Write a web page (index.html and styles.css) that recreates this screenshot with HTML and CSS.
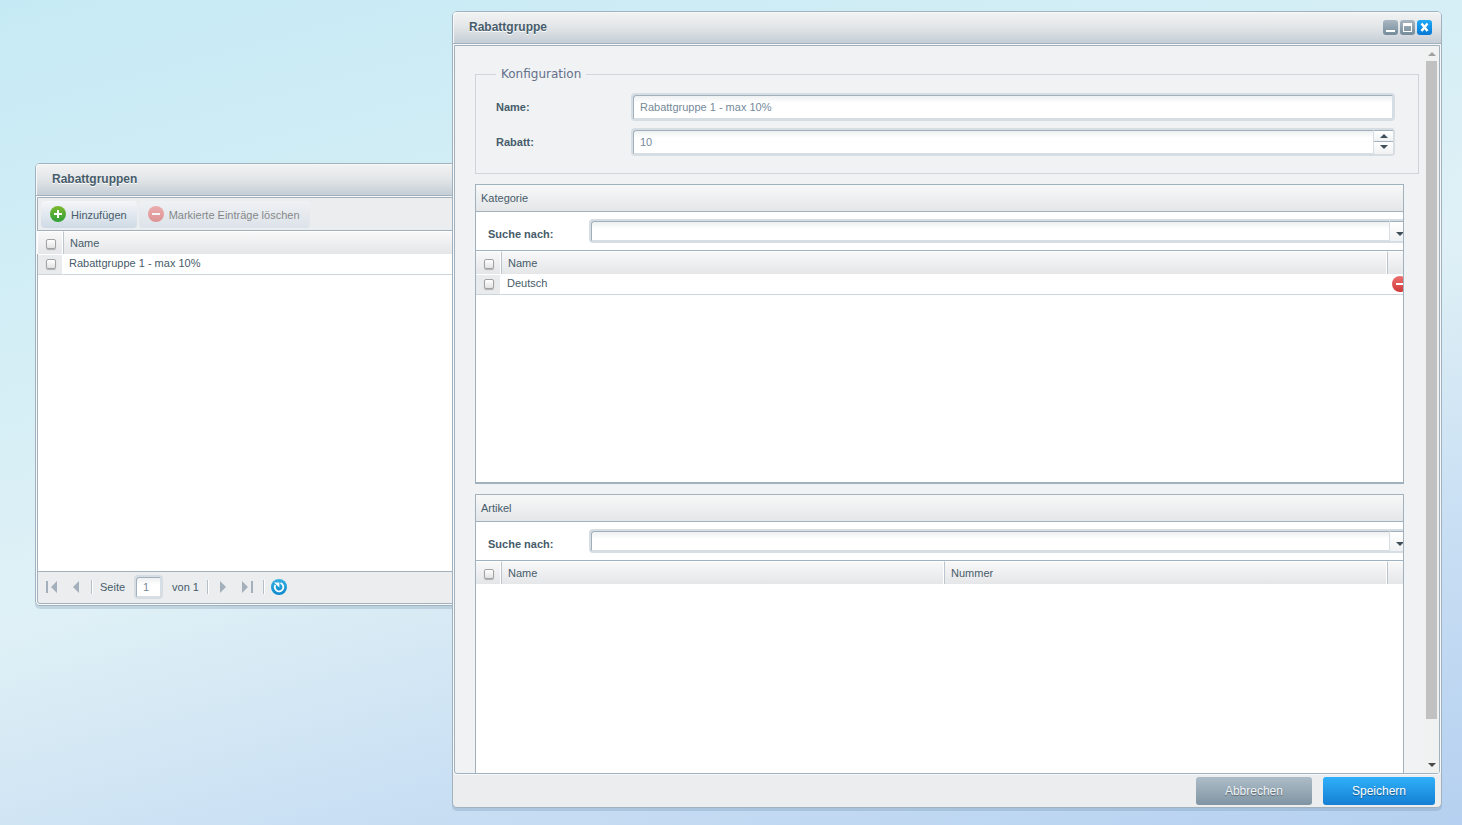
FILE: index.html
```html
<!DOCTYPE html>
<html lang="de">
<head>
<meta charset="utf-8">
<title>Rabattgruppen</title>
<link rel="stylesheet" href="styles.css">
</head>
<body>
<svg class="defs" aria-hidden="true">
  <defs>
    <linearGradient id="green" x1="0" y1="0" x2="0" y2="1"><stop offset="0" stop-color="#7cb82f"/><stop offset="1" stop-color="#2f9f3a"/></linearGradient>
    <linearGradient id="red" x1="0" y1="0" x2="0" y2="1"><stop offset="0" stop-color="#ee6f70"/><stop offset="1" stop-color="#d03a3a"/></linearGradient>
    <linearGradient id="blue" x1="0" y1="0" x2="0" y2="1"><stop offset="0" stop-color="#35b0e4"/><stop offset="1" stop-color="#0c88cc"/></linearGradient>
    <symbol id="plus" viewBox="0 0 16 16"><circle cx="8" cy="8" r="8" fill="url(#green)"/><path d="M8 4v8M4 8h8" stroke="#fff" stroke-width="2"/></symbol>
    <symbol id="minus" viewBox="0 0 16 16"><circle cx="8" cy="8" r="8" fill="url(#red)"/><path d="M4 8h8" stroke="#fff" stroke-width="2"/></symbol>
  </defs>
</svg>
<main class="desktop">
  <section class="window window-list" aria-labelledby="list-title">
    <header class="window-header"><h1 class="window-title" id="list-title">Rabattgruppen</h1></header>
    <div class="window-body list-body">
      <div class="toolbar">
        <button class="tool-button" type="button"><svg class="icon"><use href="#plus"/></svg>Hinzufügen</button>
        <button class="tool-button" type="button" disabled><svg class="icon"><use href="#minus"/></svg>Markierte Einträge löschen</button>
      </div>
      <div class="grid-area">
        <table class="grid">
          <colgroup><col class="col-check"><col></colgroup>
          <thead><tr><th class="check"><input class="tick" type="checkbox" aria-label="Alle auswählen"></th><th>Name</th></tr></thead>
          <tbody><tr><td class="check"><input class="tick" type="checkbox" aria-label="Rabattgruppe 1 auswählen"></td><td>Rabattgruppe 1 - max 10%</td></tr></tbody>
        </table>
      </div>
      <nav class="pager" aria-label="Seiten">
        <button class="page-button" type="button" aria-label="Erste Seite"><svg width="12" height="12"><path d="M0 0h2v12H0zM11 0v12L5 6z" fill="#a3b0bb"/></svg></button>
        <button class="page-button" type="button" aria-label="Vorherige Seite"><svg width="8" height="12"><path d="M7 0v12L1 6z" fill="#a3b0bb"/></svg></button>
        <span class="separator"></span>
        <label class="page-label" for="page">Seite</label>
        <span class="field page-field"><input class="field-input" id="page" type="text" value="1"></span>
        <span class="page-total">von 1</span>
        <span class="separator"></span>
        <button class="page-button" type="button" aria-label="Nächste Seite"><svg width="8" height="12"><path d="M0 0v12L6 6z" fill="#a3b0bb"/></svg></button>
        <button class="page-button" type="button" aria-label="Letzte Seite"><svg width="11" height="12"><path d="M0 0v12L6 6zM9 0h2v12H9z" fill="#a3b0bb"/></svg></button>
        <span class="separator"></span>
        <button class="refresh-button" type="button" aria-label="Aktualisieren"><svg class="icon" viewBox="0 0 16 16"><circle cx="8" cy="8" r="8" fill="url(#blue)"/><path d="M9.500 4A4.300 4.300 0 1 1 4.300 6" fill="none" stroke="#fff" stroke-width="1.800"/><path d="M3 3.600h5.400v5z" fill="#fff"/></svg></button>
      </nav>
    </div>
  </section>

  <section class="window window-detail" role="dialog" aria-labelledby="detail-title">
    <header class="window-header">
      <h1 class="window-title" id="detail-title">Rabattgruppe</h1>
      <div class="window-tools">
        <button class="window-tool" type="button" aria-label="Minimieren"><svg width="15" height="15"><path d="M3 10h9v2H3z" fill="#fff"/></svg></button>
        <button class="window-tool" type="button" aria-label="Maximieren"><svg width="15" height="15"><path d="M3 3h9v9H3zM4 6v5h7V6z" fill="#fff" fill-rule="evenodd"/></svg></button>
        <button class="window-tool window-close" type="button" aria-label="Schließen"><svg width="15" height="15"><path d="M4.500 3.500l6 7.500M10.500 3.500l-6 7.500" stroke="#fff" stroke-width="2.400"/></svg></button>
      </div>
    </header>
    <div class="window-body detail-body">
      <div class="detail-content">
        <fieldset class="config">
          <legend class="config-legend">Konfiguration</legend>
          <div class="form-row">
            <label class="form-label" for="name">Name:</label>
            <span class="field form-field"><input class="field-input" id="name" type="text" value="Rabattgruppe 1 - max 10%"></span>
          </div>
          <div class="form-row">
            <label class="form-label" for="rabatt">Rabatt:</label>
            <span class="field form-field"><input class="field-input" id="rabatt" type="number" value="10">
              <span class="spinner">
                <button class="spin-button" type="button" aria-label="Erhöhen"><svg width="8" height="4"><path d="M0 4L4 0l4 4z" fill="#3f4f59"/></svg></button>
                <button class="spin-button" type="button" aria-label="Verringern"><svg width="8" height="4"><path d="M0 0l4 4 4-4z" fill="#3f4f59"/></svg></button>
              </span>
            </span>
          </div>
        </fieldset>

        <section class="panel">
          <h2 class="panel-title">Kategorie</h2>
          <div class="search">
            <label class="search-label" for="search-category">Suche nach:</label>
            <span class="field search-field"><select class="field-input" id="search-category"><option></option></select><span class="trigger"><svg width="8" height="4"><path d="M0 0l4 4 4-4z" fill="#3f4f59"/></svg></span></span>
          </div>
          <table class="grid">
            <colgroup><col class="col-check"><col><col class="col-action"></colgroup>
            <thead><tr><th class="check"><input class="tick" type="checkbox" aria-label="Alle Kategorien auswählen"></th><th>Name</th><th></th></tr></thead>
            <tbody><tr><td class="check"><input class="tick" type="checkbox" aria-label="Deutsch auswählen"></td><td>Deutsch</td><td class="action"><button class="row-button" type="button" aria-label="Löschen"><svg class="icon"><use href="#minus"/></svg></button></td></tr></tbody>
          </table>
        </section>

        <section class="panel">
          <h2 class="panel-title">Artikel</h2>
          <div class="search">
            <label class="search-label" for="search-article">Suche nach:</label>
            <span class="field search-field"><select class="field-input" id="search-article"><option></option></select><span class="trigger"><svg width="8" height="4"><path d="M0 0l4 4 4-4z" fill="#3f4f59"/></svg></span></span>
          </div>
          <table class="grid">
            <colgroup><col class="col-check"><col><col><col class="col-action"></colgroup>
            <thead><tr><th class="check"><input class="tick" type="checkbox" aria-label="Alle Artikel auswählen"></th><th>Name</th><th>Nummer</th><th></th></tr></thead>
          </table>
        </section>
      </div>
      <div class="scrollbar" aria-hidden="true">
        <svg class="scroll-arrow" width="8" height="4"><path d="M0 4L4 0l4 4z" fill="#a0a0a0"/></svg>
        <div class="scroll-track"><div class="scroll-thumb"></div></div>
        <svg class="scroll-arrow" width="8" height="4"><path d="M0 0l4 4 4-4z" fill="#484848"/></svg>
      </div>
    </div>
    <footer class="window-footer">
      <button class="button button-secondary" type="button">Abbrechen</button>
      <button class="button button-primary" type="button">Speichern</button>
    </footer>
  </section>
</main>
</body>
</html>
```
FILE: styles.css
```css
* { box-sizing: border-box; }

body {
  margin: 0;
  font: 11px/14px "Liberation Sans", Arial, sans-serif;
  color: #475c6a;
}

button, input, select { margin: 0; padding: 0; border: 0; font: inherit; color: inherit; }
h1, h2 { margin: 0; }
svg { display: block; flex: none; }
.defs { position: absolute; width: 0; height: 0; }
.icon { width: 16px; height: 16px; }

.desktop {
  position: relative;
  height: 100vh;
  overflow: hidden;
  background: linear-gradient(165deg, #c6eaf5 0%, #dff1f6 52%, #c8def3 76%, #b5d0f0 100%);
}

/* Windows */
.window {
  position: absolute;
  display: flex;
  flex-direction: column;
  border: 1px solid #a1b2be;
  border-radius: 5px;
  background: #ebedef;
  box-shadow: 0 3px 0 rgba(100, 130, 160, 0.25);
}
.window-list { left: 35px; top: 163px; width: 60%; height: 443px; }
.window-detail { left: 452px; right: 20px; top: 11px; bottom: 17px; }

.window-header {
  display: flex;
  align-items: center;
  justify-content: space-between;
  height: 32px;
  padding: 0 9px 0 16px;
  border-bottom: 1px solid #a1b2be;
  border-radius: 4px 4px 0 0;
  background: linear-gradient(#f2f3f3, #e2e5e7 50%, #c5ced6);
  box-shadow: inset 1px 1px 0 #f6f8f9;
}
.window-title { padding-bottom: 2px; font-size: 12px; font-weight: bold; text-shadow: 0 1px 0 #fff; }
.window-tools { display: flex; gap: 2px; }
.window-tool {
  width: 15px;
  height: 15px;
  border-radius: 3px;
  background: linear-gradient(#a9b7c1, #748b9a);
}
.window-close { background: linear-gradient(#1eaaf8, #0878d4); }

.window-body {
  flex: 1;
  display: flex;
  min-height: 0;
  margin: 1px 1px 0;
  border: 1px solid #a1b2be;
  border-radius: 0 0 3px 3px;
  box-shadow: 0 0 0 1px #f7f9fa;
}
.list-body { flex-direction: column; margin-bottom: 1px; }
.detail-body { background: #f0f2f4; }

/* List window */
.toolbar {
  display: flex;
  gap: 2px;
  padding: 3px 3px 2px;
  border-bottom: 1px solid #a1b2be;
}
.tool-button {
  display: flex;
  align-items: center;
  gap: 5px;
  height: 27px;
  padding: 0 10px 0 9px;
  border-radius: 4px;
  background: linear-gradient(#f4f6f9, #cfdae5);
}
.tool-button .icon { margin-bottom: 2px; }
.tool-button:disabled { opacity: 0.5; color: #16191b; }
.grid-area { flex: 1; background: #fff; }

.grid { width: 100%; table-layout: fixed; border-collapse: separate; border-spacing: 0; background: #fff; }
.col-check { width: 25px; }
.col-action { width: 16px; }
.grid th {
  height: 23px;
  padding: 0 6px 1px;
  border-top: 1px solid #fff;
  border-left: 1px solid #bcc5cc;
  background: linear-gradient(#f8f8f9, #e5e6e8);
  box-shadow: -1px 0 0 #fff;
  font-weight: normal;
  text-align: left;
}
.grid td { height: 21px; padding: 0 6px 2px; border-bottom: 1px solid #ccd5dc; }
.grid .check { padding: 1px 0 0 8px; }
.grid th.check { border-left: 0; }
.grid td.check {
  padding: 0 0 2px 8px;
  border-top: 1px solid #fff;
  border-right: 1px solid #fff;
  background: #e9ebed;
  background-clip: padding-box;
}
.grid .action { padding: 0 0 0 5px; overflow: hidden; }
.row-button { display: block; width: 16px; height: 16px; background: none; }
.tick {
  display: block;
  appearance: none;
  width: 10px;
  height: 10px;
  border: 1px solid #a2a2a2;
  border-radius: 2px;
  background: linear-gradient(#fff, #e2e2e2);
  box-shadow: 0 1px 1px rgba(0, 0, 0, 0.25);
}

.pager {
  display: flex;
  align-items: center;
  height: 32px;
  padding: 0 0 2px 8px;
  border-top: 1px solid #a1b2be;
}
.page-button, .refresh-button { background: none; }
.page-button + .page-button { margin-left: 14px; }
.separator { width: 2px; height: 14px; margin: 0 7px 0 11px; border-left: 1px solid #b4bfc8; background: #fff; }
.page-label { margin-right: 9px; }
.page-total { margin: 0 -2px 0 9px; }
.page-total + .separator { margin-left: 10px; margin-right: 11px; }
.page-total ~ .page-button + .separator { margin-left: 10px; margin-right: 6px; }

/* Fields */
.field {
  display: flex;
  height: 28px;
  border: 2px solid #d6dde3;
  border-radius: 4px;
  background: #fff;
}
.field-input {
  flex: 1;
  min-width: 0;
  appearance: none;
  border: 1px solid #a1b0bc;
  border-right-color: #d6dde3;
  border-bottom-color: #d6dde3;
  border-radius: 3px 0 0 0;
  padding: 0 6px;
  background: linear-gradient(#edf0f1, #fff 7px);
  color: #75899a;
  outline: 0;
}
.field-input[type="number"] { appearance: textfield; }
.field-input::-webkit-inner-spin-button { appearance: none; }
.page-field { width: 29px; height: 24px; }

/* Configuration */
.detail-content {
  flex: 1;
  display: flex;
  flex-direction: column;
  gap: 10px;
  min-width: 0;
  overflow: hidden;
  padding: 20px 5px 0 20px;
}
.config { min-width: 0; margin: 0; padding: 11px 23px 17px 20px; border: 1px solid #cfd5d9; }
.config-legend { padding: 0 5px; font: 12px/16px "DejaVu Sans", sans-serif; color: #65708a; }
.form-row { display: flex; align-items: center; }
.form-row + .form-row { margin-top: 7px; }
.form-label { width: 135px; font-weight: bold; }
.form-field { flex: 1; min-width: 0; }
.spinner { display: flex; flex-direction: column; width: 19px; border-top: 1px solid #a1b0bc; }
.spin-button {
  flex: 1;
  display: flex;
  align-items: center;
  justify-content: center;
  background: linear-gradient(#fff, #f0f1f2);
}
.spin-button + .spin-button { padding-bottom: 2px; border-top: 1px solid #a1b0bc; }

/* Panels */
.panel {
  flex: none;
  height: 300px;
  margin-right: 15px;
  overflow: hidden;
  border: 1px solid #a1b2be;
  border-bottom-width: 2px;
  background: #fff;
}
.panel-title {
  height: 27px;
  padding: 0 5px;
  border-bottom: 1px solid #a1b2be;
  background: linear-gradient(#f8f8f8, #e4e6e8);
  font-size: 11px;
  font-weight: normal;
  line-height: 26px;
}
.search {
  display: flex;
  height: 39px;
  padding: 7px 0 0 12px;
  border-bottom: 1px solid #a1b2be;
}
.search-label { flex: none; width: 101px; font-weight: bold; line-height: 30px; }
.search-field { flex: 1; height: 24px; margin-right: -9px; }
.trigger {
  display: flex;
  align-items: center;
  justify-content: center;
  width: 20px;
  padding-top: 4px;
  border-top: 1px solid #a1b0bc;
  background: linear-gradient(#fff, #f0f1f2);
}

/* Scrollbar */
.scrollbar {
  display: flex;
  flex-direction: column;
  align-items: center;
  width: 15px;
  padding: 6px 0;
  background: #f0f1f1;
}
.scroll-track { flex: 1; margin: 5px 0 2px; }
.scroll-thumb { width: 11px; height: 94%; background: #c1c1c1; }

/* Footer */
.window-footer { display: flex; justify-content: flex-end; gap: 11px; padding: 3px 6px 2px; }
.button {
  height: 28px;
  padding: 0 29px;
  border-radius: 3px;
  color: #fff;
  font-size: 12px;
  text-shadow: 0 1px 1px rgba(0, 0, 0, 0.4);
}
.button-secondary { background: linear-gradient(#adbdc8, #8094a3); color: #f0f4f7; }
.button-primary { background: linear-gradient(#2fb0fa, #157fd3); }
```
